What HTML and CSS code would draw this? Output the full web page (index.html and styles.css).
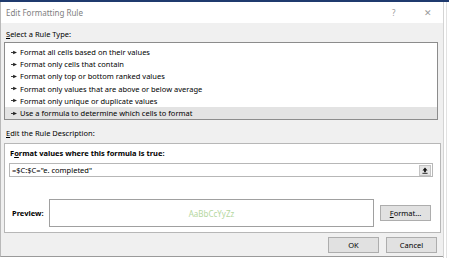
FILE: index.html
```html
<!DOCTYPE html>
<html lang="en">
<head>
    <meta charset="UTF-8">
    <title>Edit Formatting Rule</title>
    <link rel="stylesheet" href="styles.css">
</head>
<body>
    <div class="topbar"></div>

    <div class="screen">
        <div class="dialog">
            <div class="titlebar">
                <span class="title">Edit Formatting Rule</span>
                <span class="tb-help">?</span>
                <span class="tb-close">&#x2715;</span>
            </div>

            <div class="content">
                <div class="label"><u>S</u>elect a Rule Type:</div>

                <ul class="rule-list">
                    <li><svg class="arrow" viewBox="0 0 7 5"><path d="M0 2.5H3" stroke="#222" stroke-width="1"/><path d="M2.5 0.5L7 2.5L2.5 4.5Z" fill="#222"/></svg>Format all cells based on their values</li>
                    <li><svg class="arrow" viewBox="0 0 7 5"><path d="M0 2.5H3" stroke="#222" stroke-width="1"/><path d="M2.5 0.5L7 2.5L2.5 4.5Z" fill="#222"/></svg>Format only cells that contain</li>
                    <li><svg class="arrow" viewBox="0 0 7 5"><path d="M0 2.5H3" stroke="#222" stroke-width="1"/><path d="M2.5 0.5L7 2.5L2.5 4.5Z" fill="#222"/></svg>Format only top or bottom ranked values</li>
                    <li><svg class="arrow" viewBox="0 0 7 5"><path d="M0 2.5H3" stroke="#222" stroke-width="1"/><path d="M2.5 0.5L7 2.5L2.5 4.5Z" fill="#222"/></svg>Format only values that are above or below average</li>
                    <li><svg class="arrow" viewBox="0 0 7 5"><path d="M0 2.5H3" stroke="#222" stroke-width="1"/><path d="M2.5 0.5L7 2.5L2.5 4.5Z" fill="#222"/></svg>Format only unique or duplicate values</li>
                    <li class="selected"><svg class="arrow" viewBox="0 0 7 5"><path d="M0 2.5H3" stroke="#222" stroke-width="1"/><path d="M2.5 0.5L7 2.5L2.5 4.5Z" fill="#222"/></svg>Use a formula to determine which cells to format</li>
                </ul>

                <div class="label label-desc"><u>E</u>dit the Rule Description:</div>

                <div class="desc-box">
                    <div class="desc-title">F<u>o</u>rmat values where this formula is true:</div>
                    <div class="formula">
                        <span class="formula-text">=$C:$C="e. completed"</span>
                        <span class="collapse-btn">
                            <svg viewBox="0 0 7 8"><path d="M3.5 0.5L6.5 4H4.5V6H2.5V4H0.5Z" fill="#111"/><path d="M0.5 7.3H6.5" stroke="#111" stroke-width="1"/></svg>
                        </span>
                    </div>

                    <div class="preview-row">
                        <span class="preview-label">Preview:</span>
                        <div class="preview-box">AaBbCcYyZz</div>
                        <button class="btn btn-format"><u>F</u>ormat...</button>
                    </div>
                </div>

                <div class="actions">
                    <button class="btn">OK</button>
                    <button class="btn">Cancel</button>
                </div>
            </div>
        </div>
        <div class="outside"></div>
    </div>
</body>
</html>
```

FILE: styles.css
```css
body {
    margin: 0;
    width: 449px;
    height: 258px;
    overflow: hidden;
    background-color: #fff;
    font-family: "Noto Sans", "Open Sans", sans-serif;
    font-size: 7.5px;
    color: #000;
}

.topbar {
    height: 2px;
    background-color: #1f3a6e;
}

.screen {
    display: flex;
    height: 256px;
}

.dialog {
    width: 442px;
    height: 254px;
    border-left: 1px solid #b9b9b9;
    border-bottom: 1px solid #9a9a9a;
    display: flex;
    flex-direction: column;
    background-color: #f0f0f0;
}

.outside {
    flex: 1;
    border-left: 1px solid #d4d4d4;
    background-image: linear-gradient(to right, transparent 2px, #e2e2e2 2px, #e2e2e2 3px, transparent 3px);
}

.titlebar {
    height: 21px;
    flex-shrink: 0;
    background-color: #fff;
    display: flex;
    align-items: center;
    padding-left: 5px;
    color: #808080;
    font-size: 8px;
}

.title {
    flex: 1;
}

.tb-help {
    width: 10px;
    margin-right: 22px;
    font-size: 8px;
    color: #9a9a9a;
}

.tb-close {
    width: 10px;
    margin-right: 9px;
    font-size: 9px;
    color: #9a9a9a;
}

.content {
    flex: 1;
    padding: 6px 2px 0 3px;
    display: flex;
    flex-direction: column;
}

.label {
    height: 11px;
    line-height: 11px;
    padding-left: 2px;
}

.rule-list {
    list-style: none;
    margin: 2px 3px 0 0;
    padding: 3px 0 0;
    height: 73px;
    border: 1px solid #8c8c8c;
    background-color: #fff;
}

.rule-list li {
    height: 12.2px;
    line-height: 12.2px;
    display: flex;
    align-items: center;
    padding-left: 6px;
}

.rule-list li.selected {
    background-color: #e3e3e3;
}

.arrow {
    width: 6px;
    height: 5px;
    margin-right: 3px;
}

.label-desc {
    margin-top: 8px;
}

.desc-box {
    margin-top: 4px;
    height: 84px;
    border: 1px solid #b7b7b7;
    background-color: #fff;
    padding: 4px 7px 0 4px;
}

.desc-title {
    height: 11px;
    line-height: 11px;
    font-weight: bold;
    padding-left: 1px;
}

.formula {
    margin-top: 4px;
    height: 12px;
    border: 1px solid #b7b7b7;
    display: flex;
    align-items: center;
    padding-left: 2px;
}

.formula-text {
    flex: 1;
}

.collapse-btn {
    width: 12px;
    height: 11px;
    margin-right: 1px;
    background-color: #e5e5e5;
    border: 1px solid #c4c4c4;
    box-sizing: border-box;
    display: flex;
    align-items: center;
    justify-content: center;
}

.collapse-btn svg {
    width: 6px;
    height: 7px;
}

.preview-row {
    margin-top: 22px;
    display: flex;
    align-items: center;
}

.preview-label {
    width: 37px;
    padding-left: 3px;
    font-weight: bold;
}

.preview-box {
    width: 323px;
    height: 26px;
    border: 1px solid #a0a0a0;
    display: flex;
    align-items: center;
    justify-content: center;
    color: #b5d7a0;
    font-size: 8px;
}

.btn {
    width: 51px;
    height: 16px;
    padding: 0;
    border: 1px solid #adadad;
    background-color: #e1e1e1;
    font-family: inherit;
    font-size: 7.5px;
    color: #000;
}

.btn-format {
    margin-left: 6px;
}

.actions {
    margin-top: 4px;
    display: flex;
    justify-content: flex-end;
    gap: 7px;
    padding-right: 4px;
}
```
